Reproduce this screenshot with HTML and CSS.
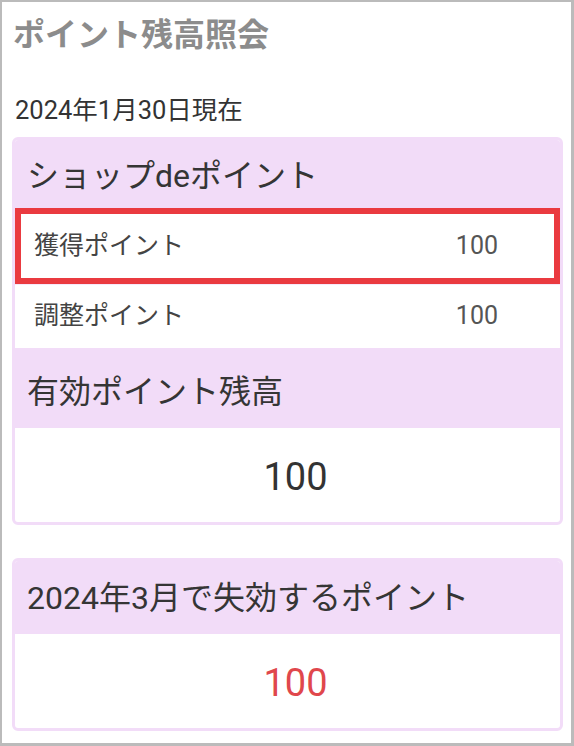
FILE: index.html
```html
<!DOCTYPE html>
<html lang="ja">
<head>
<meta charset="utf-8">
<title>ポイント残高照会</title>
<link rel="stylesheet" href="styles.css">
</head>
<body>
<div class="frame">
  <h1 class="title">ポイント残高照会</h1>
  <p class="asof">2024年1月30日現在</p>

  <section class="card card-first">
    <h2 class="card-head head-top">ショップdeポイント</h2>
    <div class="row row-marked">
      <span class="row-label">獲得ポイント</span>
      <span class="row-value">100</span>
    </div>
    <div class="row row-plain">
      <span class="row-label">調整ポイント</span>
      <span class="row-value">100</span>
    </div>
    <h2 class="card-head head-mid">有効ポイント残高</h2>
    <div class="big-value">100</div>
  </section>

  <section class="card card-second">
    <h2 class="card-head head-second">2024年3月で失効するポイント</h2>
    <div class="big-value big-value-alert">100</div>
  </section>
</div>
</body>
</html>
```

FILE: styles.css
```css
* { box-sizing: border-box; }

html, body {
  margin: 0;
  padding: 0;
  background: #ffffff;
}

body {
  font-family: Roboto, "Noto Sans CJK JP", sans-serif;
  color: #333333;
}

.frame {
  min-height: 746px;
  border-style: solid;
  border-color: #bbbbbb;
  border-width: 2px 3px 3px 2px;
  padding: 13px 8px 12px 10px;
  display: flex;
  flex-direction: column;
}

.title {
  margin: 0;
  font-size: 32px;
  line-height: 40px;
  font-weight: 700;
  color: #8c8c8c;
  padding-left: 1px;
}

.asof {
  margin: 40px 0 12px 0;
  padding-left: 3px;
  font-size: 25.5px;
  line-height: 30px;
  color: #333333;
}

.card {
  border: 3px solid #f2dcf8;
  border-radius: 6px;
  background: #ffffff;
  overflow: hidden;
}

.card-second {
  margin-top: 33px;
}

.card-head {
  margin: 0;
  background: #f2dcf8;
  font-size: 32px;
  line-height: 40px;
  font-weight: 400;
  color: #353535;
  padding-left: 12px;
}

.head-top { padding-top: 16px; padding-bottom: 12px; }
.head-mid { padding-top: 24px; padding-bottom: 16px; }
.head-second { padding-top: 17px; padding-bottom: 16px; }

.row {
  display: grid;
  grid-template-columns: 1fr auto;
  align-items: center;
  font-size: 25px;
  line-height: 30px;
  background: #ffffff;
}

.row-marked {
  border: 6px solid #ea3a40;
  padding: 17px 56px 17px 13px;
}

.row-plain {
  border-top: 1px solid #f6e9fa;
  padding: 16px 62px 17px 19px;
}

.row-label {
  color: #444444;
}

.row-value {
  color: #555555;
}

.big-value {
  text-align: center;
  font-size: 38px;
  line-height: 50px;
  padding: 24px 0 20px 16px;
  color: #333333;
}

.big-value-alert {
  color: #e0474c;
}
```
